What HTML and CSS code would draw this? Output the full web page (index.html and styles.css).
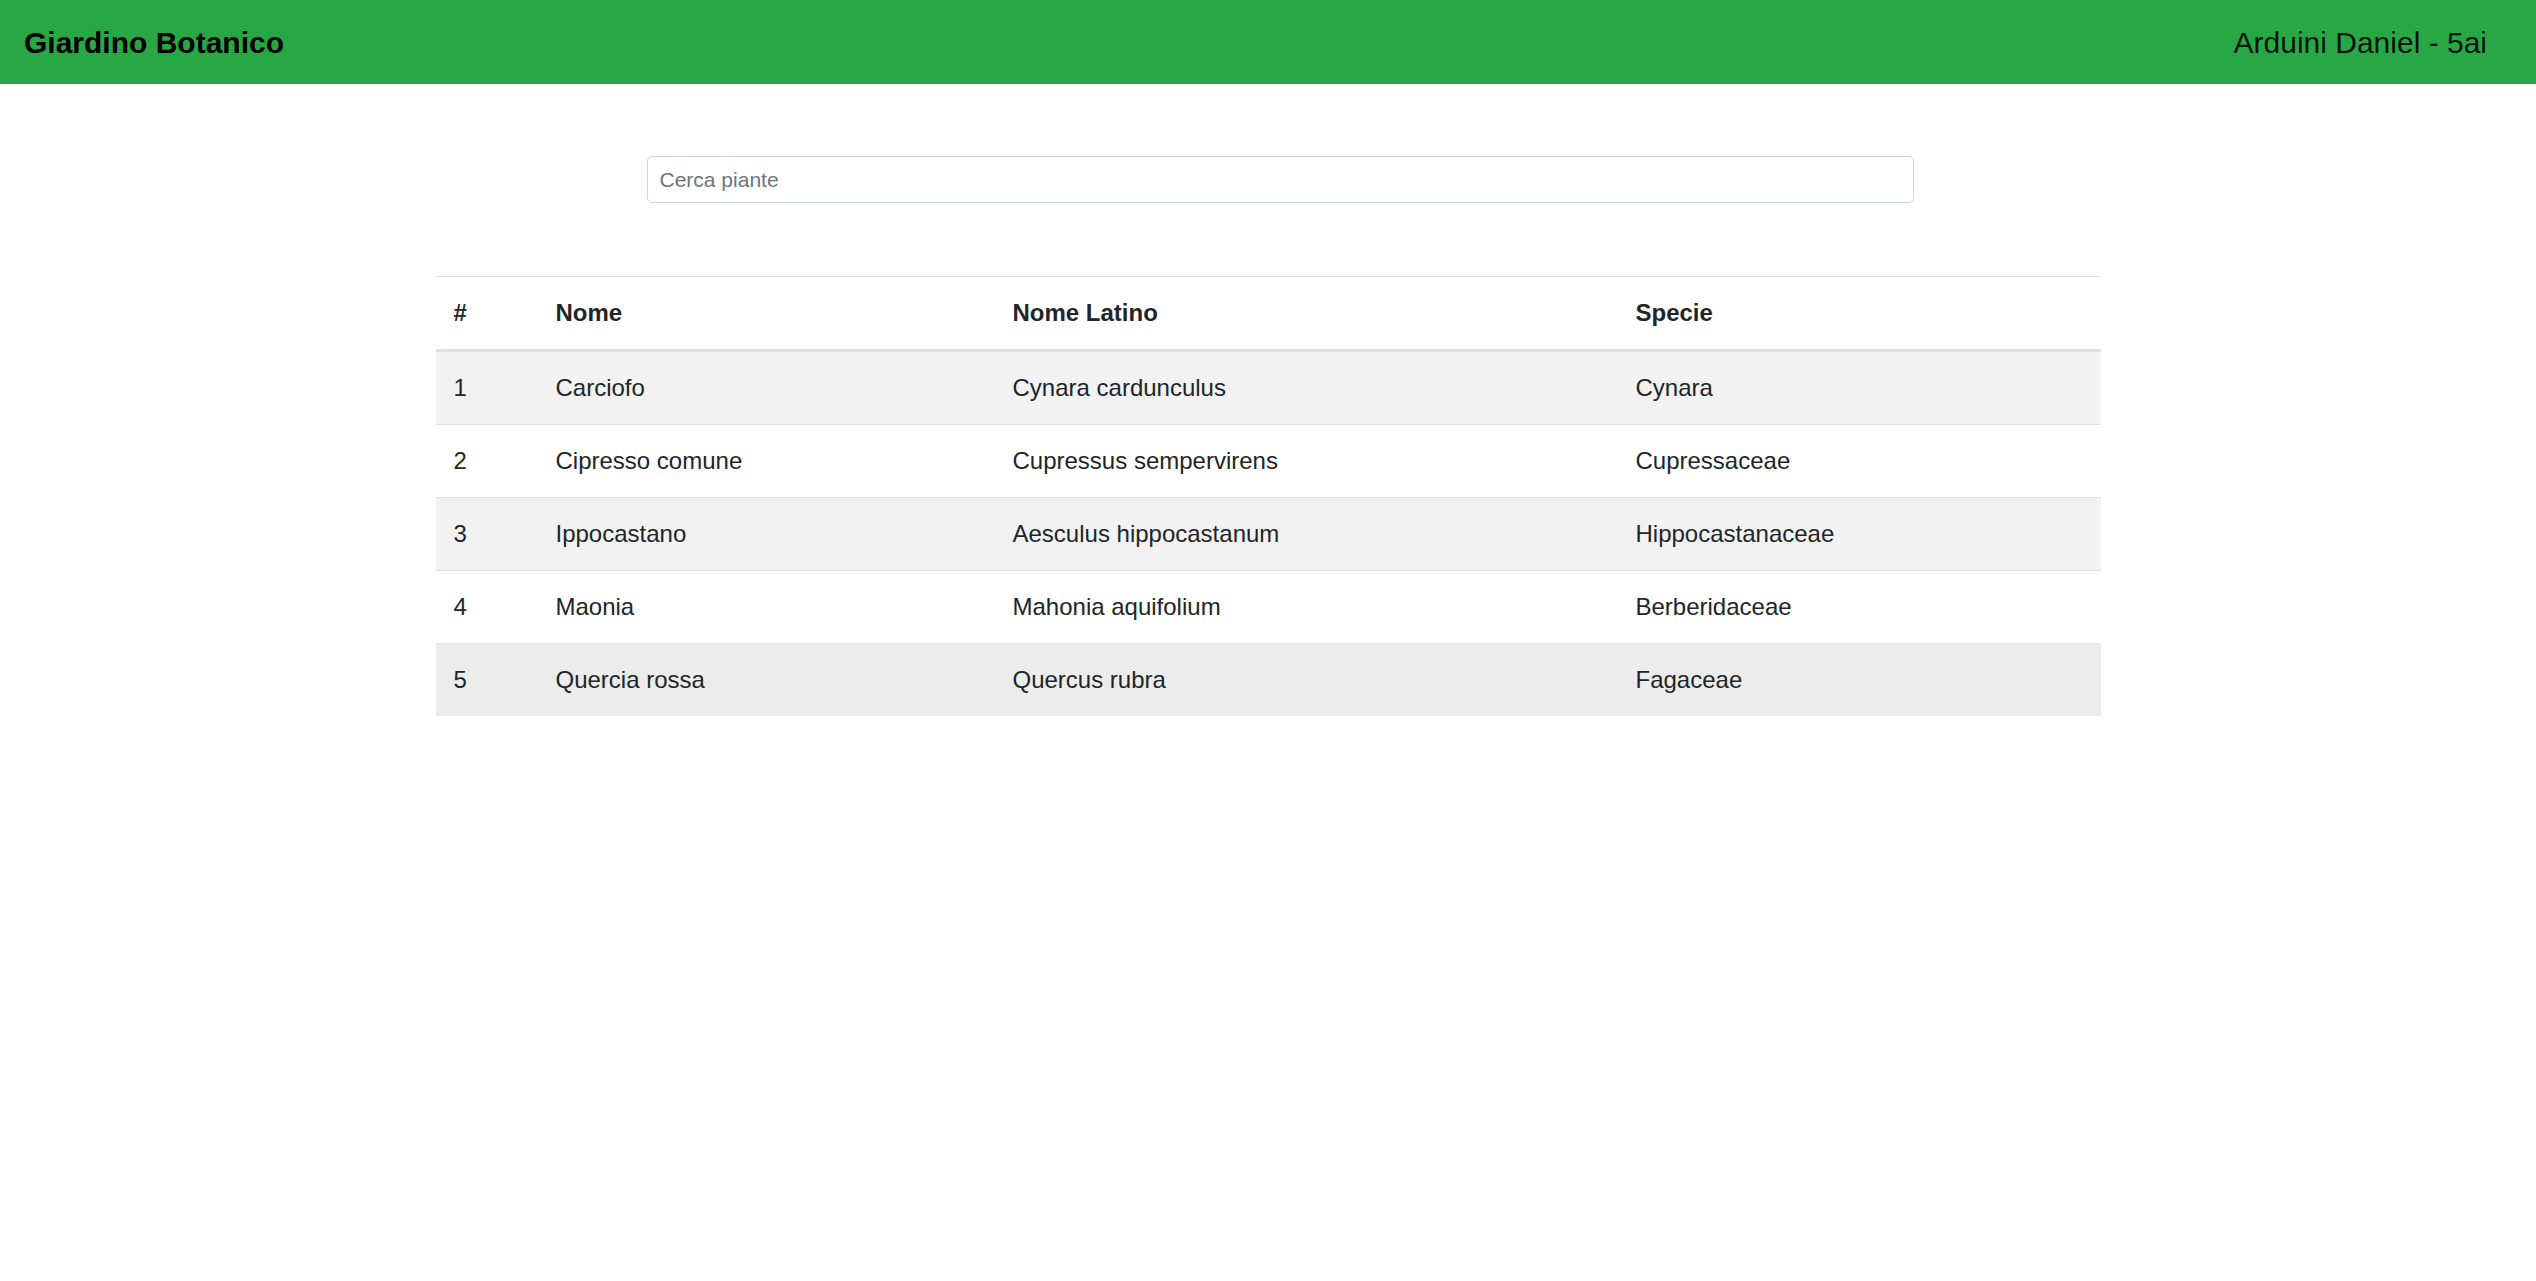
FILE: index.html
```html
<!DOCTYPE html>
<html lang="it">
<head>
<meta charset="utf-8">
<title>Giardino Botanico</title>
<link rel="stylesheet" href="styles.css">
</head>
<body>
<header class="navbar">
  <span class="brand">Giardino Botanico</span>
  <span class="author">Arduini Daniel - 5ai</span>
</header>
<main class="main">
  <div class="search-row">
    <input class="search" type="text" placeholder="Cerca piante">
  </div>
  <table class="table">
    <thead>
      <tr>
        <th class="c-num">#</th>
        <th class="c-nome">Nome</th>
        <th class="c-latino">Nome Latino</th>
        <th class="c-specie">Specie</th>
      </tr>
    </thead>
    <tbody>
      <tr class="odd"><td>1</td><td>Carciofo</td><td>Cynara cardunculus</td><td>Cynara</td></tr>
      <tr><td>2</td><td>Cipresso comune</td><td>Cupressus sempervirens</td><td>Cupressaceae</td></tr>
      <tr class="odd"><td>3</td><td>Ippocastano</td><td>Aesculus hippocastanum</td><td>Hippocastanaceae</td></tr>
      <tr><td>4</td><td>Maonia</td><td>Mahonia aquifolium</td><td>Berberidaceae</td></tr>
      <tr class="hover"><td>5</td><td>Quercia rossa</td><td>Quercus rubra</td><td>Fagaceae</td></tr>
    </tbody>
  </table>
</main>
</body>
</html>
```

FILE: styles.css
```css
* { box-sizing: border-box; }

body {
  margin: 0;
  font-family: "Liberation Sans", Arial, sans-serif;
  color: #212529;
  background: #fff;
}

.navbar {
  height: 84px;
  background: #28a745;
  display: flex;
  align-items: center;
  justify-content: space-between;
  padding: 2px 49px 0 24px;
}

.brand {
  font-size: 30px;
  font-weight: bold;
  color: #000;
}

.author {
  font-size: 30px;
  color: rgba(0, 0, 0, 0.9);
}

.main {
  width: 1665px;
  margin: 0 auto;
  padding-top: 72px;
}

.search-row {
  padding-left: 211px;
  margin-bottom: 73px;
}

.search {
  display: block;
  width: 1267px;
  height: 47px;
  padding: 6px 12px;
  font-family: "Liberation Sans", Arial, sans-serif;
  font-size: 21px;
  line-height: 31px;
  color: #495057;
  border: 1px solid #ced4da;
  border-radius: 5px;
  background: #fff;
  outline: none;
}

.search::placeholder { color: #6c757d; }

.table {
  width: 1665px;
  border-collapse: collapse;
  font-size: 24px;
  line-height: 36px;
}

.table th,
.table td {
  padding: 18px;
  text-align: left;
  border-top: 1px solid #dee2e6;
  vertical-align: top;
}

.table thead th {
  font-weight: bold;
  border-bottom: 3px solid #dee2e6;
}

.c-num { width: 102px; }
.c-nome { width: 457px; }
.c-latino { width: 623px; }
.c-specie { width: 483px; }

.table tr.odd { background: #f2f2f2; }
.table tr.hover { background: #ececec; }
```
